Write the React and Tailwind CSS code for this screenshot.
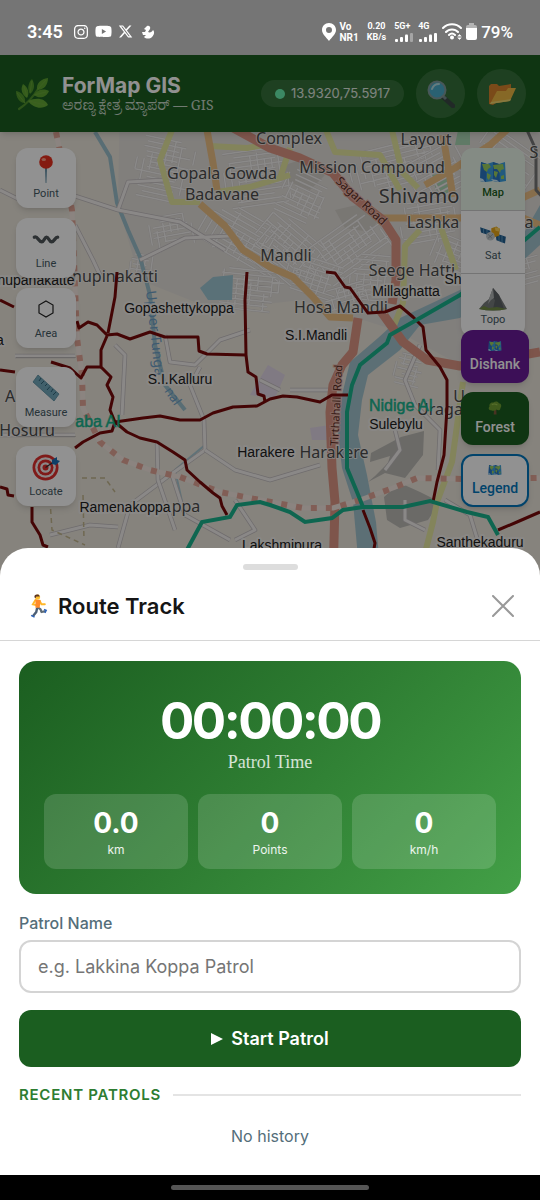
import React from "react";
import { FaInstagram, FaYoutube, FaXTwitter } from "react-icons/fa6";

/* ---------- pictograms ---------- */

const Leaf = ({ className }) => (
  <svg viewBox="0 0 34 34" className={className} aria-hidden="true">
    <path d="M4 32C10 28 17 22 23 12" stroke="#5c9e31" strokeWidth="2.2" fill="none" strokeLinecap="round" />
    <path d="M33 1C26 2 21 6 22 13C29 13 33 8 33 1Z" fill="#6fb536" />
    <path d="M17 2C13 6 12 12 15 17C20 13 20 7 17 2Z" fill="#5fa52f" />
    <path d="M8 7C5 12 7 18 12 21C15 16 13 10 8 7Z" fill="#6fb536" />
    <path d="M1 14C1 20 4 26 10 26C11 20 7 15 1 14Z" fill="#5fa52f" />
    <path d="M34 14C27 11 22 13 19 18C24 22 31 21 34 14Z" fill="#6fb536" />
    <path d="M33 28C30 21 21 20 13 24C18 31 27 33 33 28Z" fill="#78bd3c" />
    <path d="M31 3L23 12M17 4L15 16M9 9L12 20M2 16L10 26M31 15L19 18M30 28L14 24" stroke="#86c048" strokeWidth=".6" fill="none" />
  </svg>
);

const Magnifier = ({ className }) => (
  <svg viewBox="0 0 28 28" className={className} aria-hidden="true">
    <path d="M16 17L26 26" stroke="#3b4348" strokeWidth="4.500" strokeLinecap="round" />
    <path d="M15 15L19 19" stroke="#80919a" strokeWidth="3" />
    <circle cx="10" cy="10" r="8.500" fill="#4fb6e2" stroke="#8ca2ad" strokeWidth="2" />
    <path d="M5 9C6 6 8 4 12 4" stroke="#c8eefc" strokeWidth="2" fill="none" strokeLinecap="round" />
  </svg>
);

const Folder = ({ className }) => (
  <svg viewBox="0 0 28 24" className={className} aria-hidden="true">
    <path d="M1 4L3 2H9L11 4L23 2V10L5 23L1 22Z" fill="#e8862b" />
    <path d="M2 22L9 9L18 9L20 6L28 6L22 19Z" fill="#ffc044" />
    <path d="M2 22L22 19L23 17L3 20Z" fill="#ffdf75" />
  </svg>
);

const Pin = ({ className }) => (
  <svg viewBox="0 0 28 28" className={className} aria-hidden="true">
    <path d="M13 12H15L14.400 28H13.600Z" fill="#5c8aa2" />
    <circle cx="14" cy="7" r="6.800" fill="#e8311f" />
    <ellipse cx="11.800" cy="4.500" rx="2.200" ry="1.500" fill="#ff9d86" />
  </svg>
);

const Wave = ({ className }) => (
  <svg viewBox="0 0 30 28" className={className} aria-hidden="true">
    <path d="M2.500 12C6 10 7 17 10.500 17C13 17 13.500 12 15.500 12C18 12 18 17 21 17C24 17 24.500 12 27.500 12" stroke="#4f565a" strokeWidth="3.600" fill="none" strokeLinecap="round" />
  </svg>
);

const Hexagon = ({ className }) => (
  <svg viewBox="0 0 28 28" className={className} aria-hidden="true">
    <path d="M14 6L21 10V18L14 22L7 18V10Z" fill="none" stroke="#222" strokeWidth="1.200" />
  </svg>
);

const Ruler = ({ className }) => (
  <svg viewBox="0 0 28 28" className={className} aria-hidden="true">
    <path d="M6 1L27 20L22 27L1 8Z" fill="#72a9bd" stroke="#588c9e" strokeWidth=".8" />
    <path d="M9 4L7 7M12 7L9 10M15 10L13 12M18 12.500L15 16M21 15L19 18M24 18L21 21" stroke="#32657a" strokeWidth="1" />
  </svg>
);

const Target = ({ className }) => (
  <svg viewBox="0 0 28 28" className={className} aria-hidden="true">
    <circle cx="13.500" cy="14.500" r="13" fill="#df2f2d" />
    <circle cx="13.500" cy="14.500" r="10.300" fill="#f5eeee" />
    <circle cx="13.500" cy="14.500" r="8" fill="#df2f2d" />
    <circle cx="13.500" cy="14.500" r="5.300" fill="#f5eeee" />
    <circle cx="13.500" cy="14.500" r="3" fill="#df2f2d" />
    <path d="M13.500 14.500L23 8" stroke="#333" strokeWidth="1.200" />
    <path d="M20 7L25 4L25 7L28 8L24 12L20 11Z" fill="#1c6fb5" />
  </svg>
);

const WorldMap = ({ className }) => (
  <svg viewBox="0 0 28 24" className={className} aria-hidden="true">
    <path d="M2 2L8 4L14 2L20 4L26 2L27 21L21 22L14 21L7 22L1 21Z" fill="#3d9fe0" />
    <path d="M2 2L8 4L7 22L1 21ZM14 2L20 4L21 22L14 21Z" fill="#2b76c4" />
    <path d="M3 4L10 4L12 7L9 9L8 12L5 10ZM8 13L12 15L10 20L8 18ZM14 5L24 4L25 9L22 10L21 13L18 9L15 9ZM15 11L19 12L17 18L15 15ZM22 16L25 15L25 19L22 19Z" fill="#9bcf62" />
    <path d="M1 18L4 19L6 22L1 21ZM12 19L18 20L20 22L14 21Z" fill="#cdeaf8" />
  </svg>
);

const Satellite = ({ className }) => (
  <svg viewBox="0 0 30 28" className={className} aria-hidden="true">
    <path d="M0 5L12 9L12 15L1 11Z" fill="#235f91" />
    <path d="M18 12L30 16L29 24L19 20Z" fill="#235f91" />
    <path d="M4 6V12M8 8V14M22 14V21M25.500 15V23" stroke="#72b3da" strokeWidth=".8" />
    <path d="M13 6L19 4L23 7L22 15L16 17L13 14Z" fill="#e7a619" />
    <path d="M17 5L23 6L22 10L18 9Z" fill="#ffd45c" />
    <circle cx="12" cy="15.500" r="5" fill="#c5cdd0" />
    <path d="M9 13L14 18M9 18L15 13" stroke="#7b8a91" strokeWidth=".8" />
  </svg>
);

const Mountain = ({ className }) => (
  <svg viewBox="0 0 28 24" className={className} aria-hidden="true">
    <path d="M0 22L5 16L10 12L14 1L20 8L28 22Q14 25 0 22Z" fill="#777b7c" />
    <path d="M14 1L13 10L16 13L14 22L25 22L20 8Z" fill="#5c6164" />
    <path d="M14 1L11 9L9 17L12 13L15 11Z" fill="#b1b5b6" />
    <path d="M0 22L5 19L10 21L18 20L28 22Q14 25 0 22Z" fill="#718b46" />
  </svg>
);

const Tree = ({ className }) => (
  <svg viewBox="0 0 18 18" className={className} aria-hidden="true">
    <path d="M8 9H10.500L11 17.500H7.300Z" fill="#80583b" />
    <path d="M4 12C1 12 0 9 2 7C1 4 4 1 7 2C9 0 13 0 14 3C17 3 18 7 16 9C16 12 13 13 11 11C9 13 6 13 4 12Z" fill="#6f9f32" />
    <path d="M5 5C7 3 10 4 12 5" stroke="#9ac54e" strokeWidth="1.500" fill="none" />
  </svg>
);

const Runner = ({ className }) => (
  <svg viewBox="0 0 20 28" className={className} aria-hidden="true">
    <path d="M9 15L13 18L14 21L19 20" stroke="#5e6b75" strokeWidth="2.600" fill="none" strokeLinejoin="round" />
    <path d="M9 16L8 21L4 26" stroke="#4d5f75" strokeWidth="2.800" fill="none" />
    <path d="M17 18L19.500 19L18 22M2 25L6 27" stroke="#2e63b8" strokeWidth="1.800" fill="none" />
    <path d="M7 7L4 12L8 13M12 8L14 12L18 12" stroke="#ffb829" strokeWidth="2.200" fill="none" strokeLinecap="round" />
    <path d="M7 6L13 7L12 16L7 16Z" fill="#ff8a2a" />
    <circle cx="9.500" cy="3.500" r="3" fill="#ffc02e" />
    <path d="M6 4C5 1 8 0 11 1L12 3L8 3L7 5Z" fill="#5c3424" />
  </svg>
);

/* ---------- map ---------- */

const districts = [
  [135, 140, 60, 62, 12], [225, 150, 64, 60, -8], [200, 215, 90, 48, 30], [250, 225, 72, 56, 40],
  [215, 270, 70, 45, 6], [280, 175, 48, 46, 25], [350, 145, 90, 44, -14], [310, 225, 80, 50, -35],
  [285, 260, 60, 40, 18], [350, 255, 40, 46, 5], [400, 200, 60, 44, -10], [430, 240, 50, 40, 22],
  [325, 285, 50, 26, -16], [410, 150, 60, 46, -28], [395, 350, 28, 40, 14], [470, 320, 62, 46, 10],
  [150, 215, 45, 30, -10], [130, 255, 24, 28, 8], [470, 140, 70, 56, 35], [500, 240, 40, 50, -15],
];

function streetPath(w, h, seed) {
  let s = seed * 9301 + 49297;
  const rnd = () => (s = (s * 9301 + 49297) % 233280) / 233280;
  let d = "";
  for (let y = -h / 2; y < h / 2; y += 5) {
    const a = -w / 2 + rnd() * w * 0.3;
    d += `M${a} ${y}H${w / 2 - rnd() * w * 0.35}`;
  }
  for (let x = -w / 2; x < w / 2; x += 7) {
    const a = -h / 2 + rnd() * h * 0.5;
    d += `M${x} ${a}V${a + 10 + rnd() * h * 0.4}`;
  }
  return d;
}

const trunk = [
  "M215 118L270 148L300 158L333 173L353 197L383 220L396 240L396 280L392 304",
  "M358 318L353 352L342 365L333 385L330 412L332 468L335 502L333 580",
  "M380 310L403 342L427 360L460 366L540 352",
];
const primary = [
  "M207 130L213 163L217 190M200 204L225 226L243 250L270 267L293 277L313 297L330 317L353 318",
  "M383 218L460 218L500 208L540 190M443 135L453 197M425 185L455 168L490 145L540 100M480 200L540 225",
];
const secondary = [
  "M172 130L160 160L172 202L200 202M210 146L247 148L270 144M217 192L250 187L290 175",
  "M326 130L335 152L380 155L400 190M392 130L402 172L418 188M420 230L405 246L403 303L393 328",
  "M463 382L452 462L437 502L433 522L418 580M290 148L280 178M440 225L456 270",
];
const lanes = [
  "M75 196L118 210L180 222L225 250M75 225L93 260L100 275M140 260L185 238L230 236M118 210L128 182L165 180M0 190L30 205",
  "M165 335L170 362L195 365L220 340L250 330M200 367L190 385L204 420L205 450L170 475L130 505L118 548",
  "M205 450L235 470L270 480L320 465M115 345L125 355L122 415M157 440L158 480L175 530M172 475L185 515L230 540",
  "M420 345L405 380L415 405L440 430L438 470M395 430L400 450L385 470M405 500L405 520L425 530M445 500L470 515L480 548",
  "M290 390L330 390M260 380L280 390M50 535L90 525L118 527M235 500L255 530L235 540M0 435L75 435M15 356L75 356",
];
const boundary = [
  "M117 272L115 297L108 333M77 321L79 328L88 322L97 325L107 335L117 334L130 339L150 332L165 337L198 337L199 351L207 354L246 355",
  "M247 272L245 300L246 355L248 372L256 377L258 394L264 396L265 402",
  "M107 336L101 350L101 367L111 377L107 385L113 397L110 410L115 422L112 431L100 433L83 442L75 448",
  "M101 367L87 367L81 378L70 368L51 362M0 370L15 372M0 300L14 307",
  "M115 422L143 418L160 416L180 420L200 420L213 413L233 407L257 406L270 399L283 396L297 397L320 402L332 395L348 395",
  "M115 422L127 432L140 438L157 442L173 452L185 460L187 470L200 482L213 493L220 498L222 506L227 515",
  "M0 487L7 489L8 495L14 496M32 507L32 522L40 535L43 545L48 547",
  "M326 272L335 273L345 287L350 288L360 302L368 313L385 312L400 306L413 317L423 327L426 350L440 367L447 380L447 408L444 455L437 482L433 502",
  "M363 510L370 528L375 543L372 560M498 530L517 522L540 512",
];

function Label({ x, y, size, kind = "place", children }) {
  const place = kind === "place";
  const cls = place
    ? "fill-[#4c4c4c] font-['Noto_Sans','Open_Sans',sans-serif]"
    : "fill-[#202020] font-['Liberation_Sans',sans-serif]";
  return (
    <text x={x} y={y} fontSize={size ?? (place ? 16 : 14)} textAnchor="middle" stroke="#f3f1ee" strokeWidth={place ? 2 : 4} strokeOpacity=".8" paintOrder="stroke" strokeLinejoin="round" className={cls}>
      {children}
    </text>
  );
}

function MapCanvas() {
  return (
    <svg viewBox="0 132 540 444" preserveAspectRatio="xMidYMin slice" className="absolute inset-0 h-full w-full" role="img" aria-label="Map">
      <rect y="100" width="540" height="500" fill="#ebe6dc" />
      <path d="M120 100H540V350L470 370L395 330L300 300L215 310L140 280L118 205Z" fill="#e3dfdb" />
      <path d="M268 365L285 375L275 398L250 395ZM310 428L330 425L328 440L312 440Z" fill="#e2d6e6" />
      <path d="M432 175L450 172L448 195L436 190ZM458 130H470V145H455Z" fill="#a9d7b4" />
      <path d="M335 210L365 203L380 218L370 232L345 228ZM285 165L300 160L325 175L310 190L285 180Z" fill="#d5d1ca" />
      <path d="M424 431L401 437L371 453L370 462L390 456L388 463L375 476L368 482L385 473L405 478L423 455ZM384 497L400 483L420 492L440 502L428 520L400 528L387 520Z" fill="#bcbab6" />
      <g strokeWidth="1.500" fill="none">
        {districts.map(([x, y, w, h, a], i) => (
          <g key={i} transform={`translate(${x + w / 2} ${y + h / 2}) rotate(${a})`}>
            <path d={streetPath(w, h, i + 3)} stroke="#cfcbc9" strokeWidth="2.200" />
            <path d={streetPath(w, h, i + 3)} stroke="#f3f1f0" />
          </g>
        ))}
      </g>
      <path d="M200 288L213 277L233 275L232 300L208 300Z" fill="#9fc7d3" />
      <path d="M95 132L110 157L117 203L128 230L140 257L150 295L155 345L165 385L185 410" stroke="#9cc0cc" strokeWidth="4" fill="none" />
      <path d="M190 385L204 420L205 445L175 470L185 515M15 356H75" stroke="#a9c9d3" strokeWidth="2" fill="none" />
      <path d="M540 205L520 240L460 290L400 318L378 338L350 362L342 395L338 435L342 468L353 502L360 580H381L376 522L367 475L358 435L362 400L368 375L400 350L420 325L460 318L540 245Z" fill="#a3c4ce" />
      {lanes.map((d) => (
        <g key={d} fill="none" strokeLinejoin="round">
          <path d={d} stroke="#c3bec0" strokeWidth="4.500" />
          <path d={d} stroke="#f3efed" strokeWidth="3" />
        </g>
      ))}
      <g fill="none" strokeLinejoin="round">
        {secondary.map((d) => <path key={d} d={d} stroke="#e6e8a0" strokeWidth="6" />)}
        {primary.map((d) => <path key={d} d={d} stroke="#eec186" strokeWidth="7" />)}
        {trunk.map((d) => <path key={d} d={d} stroke="#dd9685" strokeWidth="9" />)}
        <path d="M56 132L72 210L77 338L82 375L83 408L100 442L123 460L150 470L180 477L220 492L260 500L303 508L333 508L360 500L393 488L417 478L463 479L540 478" stroke="#f5e8e2" strokeWidth="5" />
        <path d="M56 132L72 210L77 338L82 375L83 408L100 442L123 460L150 470L180 477L220 492L260 500L303 508L333 508L360 500L393 488L417 478L463 479L540 478" stroke="#e3a697" strokeWidth="6" strokeDasharray="6 9" />
        <path d="M527 130L536 150V190L545 200" stroke="#777" strokeWidth="3" />
        <path d="M82 478L105 478L115 492M50 500L52 530L85 545M83 495L84 540" stroke="#c4b78f" strokeWidth="1.500" strokeDasharray="5 4" />
      </g>

      <Label x={289} y={144}>Complex</Label>
      <Label x={426} y={145}>Layout</Label>
      <Label x={222} y={179}>Gopala Gowda</Label>
      <Label x={222} y={200}>Badavane</Label>
      <Label x={372} y={173}>Mission Compound</Label>
      <Label x={419} y={203} size={20}>Shivamo</Label>
      <Label x={433} y={228}>Lashka</Label>
      <Label x={529} y={228}>a</Label>
      <Label x={286} y={261}>Mandli</Label>
      <Label x={412} y={276}>Seege Hatti</Label>
      <Label x={341} y={313}>Hosa Mandli</Label>
      <Label x={334} y={458}>Harakere</Label>
      <Label x={115} y={282}>nupinakatti</Label>
      <Label x={10} y={402}>A</Label>
      <Label x={27} y={436}>Hosuru</Label>
      <Label x={186} y={512}>ppa</Label>
      <Label x={440} y={415}>Uraga</Label>
      <Label x={459} y={402}>U</Label>
      <Label x={534} y={158}>S</Label>
      <text fontSize="12" stroke="#e8b3a6" strokeWidth="2" paintOrder="stroke" transform="translate(335 182) rotate(43)" className="fill-[#5d2f27] font-['Noto_Sans',sans-serif]">Sagar Road</text>
      <text fontSize="11" transform="translate(338 446) rotate(-87)" stroke="#e8b3a6" strokeWidth="2" paintOrder="stroke" className="fill-[#5d2f27] font-['Noto_Sans',sans-serif]">Tirthahalli Road</text>
      <text fontSize="14" transform="translate(146 291) rotate(84)" className="fill-[#6e9fc6] font-['Noto_Sans',sans-serif]">Upper Tunga</text>
      <text fontSize="13" transform="translate(164 391) rotate(55)" className="fill-[#6e9fc6] font-['Noto_Sans',sans-serif]">nal</text>

      <g fill="none" strokeLinejoin="round" stroke="#780a0a" strokeWidth="3">
        {boundary.map((d) => <path key={d} d={d} />)}
      </g>
      <path d="M540 227L527 238L460 295L413 322L390 335L387 343L360 365L352 385L347 412L347 468L357 492L363 507" fill="none" stroke="#19b48e" strokeWidth="4" />
      <path d="M180 565L188 548L202 522L230 517L237 505L260 502L270 505L290 512L305 522L332 518L343 510L363 507L403 507L430 501L467 512L488 517L498 535" fill="none" stroke="#19b48e" strokeWidth="4" />
      <text x="401" y="411" fontSize="16" textAnchor="middle" stroke="#19b48e" strokeWidth=".5" className="fill-[#19b48e] font-['Liberation_Sans',sans-serif]">Nidige AI</text>
      <text x="98" y="427" fontSize="16" textAnchor="middle" stroke="#19b48e" strokeWidth=".5" className="fill-[#19b48e] font-['Liberation_Sans',sans-serif]">aba AI</text>

      <Label kind="village" x={179} y={313}>Gopashettykoppa</Label>
      <Label kind="village" x={180} y={384}>S.I.Kalluru</Label>
      <Label kind="village" x={316} y={340}>S.I.Mandli</Label>
      <Label kind="village" x={406} y={296}>Millaghatta</Label>
      <Label kind="village" x={396} y={429}>Sulebylu</Label>
      <Label kind="village" x={266} y={457}>Harakere</Label>
      <Label kind="village" x={125} y={512}>Ramenakoppa</Label>
      <Label kind="village" x={282} y={550}>Lakshmipura</Label>
      <Label kind="village" x={480} y={547}>Santhekaduru</Label>
      <Label kind="village" x={36} y={285}>nupanakatte</Label>
      <Label kind="village" x={453} y={284}>Sh</Label>
      <Label kind="village" x={0} y={345}>a</Label>
    </svg>
  );
}

/* ---------- screen parts ---------- */

function Bars({ tag, faded }) {
  return (
    <div className="flex flex-col gap-0.5">
      <span className="text-[9px] leading-[9px] font-bold">{tag}</span>
      <svg viewBox="0 0 20 9" className="h-[9px] w-5" fill="#fff" aria-hidden="true">
        <rect x="1" y="6" width="3" height="3" rx="1" />
        <rect x="6" y="4" width="3" height="5" rx="1" />
        <rect x="11" y="1.500" width="3" height="7.500" rx="1" />
        <rect x="16" y="0" width="3" height="9" rx="1" opacity={faded ? 0.35 : 1} />
      </svg>
    </div>
  );
}

function StatusBar() {
  return (
    <div className="flex h-[55px] shrink-0 items-center justify-between bg-[#757575] px-[27px] pt-2 font-['Roboto',sans-serif] text-white">
      <div className="flex items-center gap-1.5">
        <span className="mr-1 text-[18px] leading-6 font-semibold">3:45</span>
        <FaInstagram className="size-4" />
        <FaYoutube className="size-[17px]" />
        <FaXTwitter className="size-[15px]" />
        <svg viewBox="0 0 14 14" className="ml-0.5 size-3.5" fill="#fff" aria-hidden="true">
          <path d="M6 1C8 0 10 2 9 4L7 7C9 8 11 7 12 5C14 7 13 10 11 12C9 14 5 14 3 12L5 10L2 10L1 7H4L5 5L3 4Z" />
        </svg>
      </div>
      <div className="flex items-center gap-1">
        <svg viewBox="0 0 14 18" className="h-[18px] w-3.5" aria-hidden="true">
          <path fillRule="evenodd" d="M7 0C3 0 0 3 0 7C0 11 4 14 7 18C10 14 14 11 14 7C14 3 11 0 7 0ZM7 4A3 3 0 1 1 7 10A3 3 0 1 1 7 4Z" fill="#fff" />
        </svg>
        <div className="mr-1 flex flex-col text-[10px] leading-[11px] font-bold">
          <span>Vo</span>
          <span>NR1</span>
        </div>
        <div className="mr-1 flex flex-col items-center text-[9px] leading-[11px] font-bold">
          <span>0.20</span>
          <span>KB/s</span>
        </div>
        <Bars tag="5G+" faded />
        <Bars tag="4G" />
        <svg viewBox="0 0 20 17" className="h-[17px] w-5" fill="none" stroke="#fff" strokeWidth="2" strokeLinecap="round" aria-hidden="true">
          <path d="M1 5C6 0 14 0 19 5M4 9C7 5.500 13 5.500 16 9M7 12C9 10 11 10 13 12" />
          <circle cx="10" cy="14.500" r="1" fill="#fff" />
          <path d="M16 13L17.500 11.500L19 13ZM16 15L17.500 16.500L19 15Z" strokeWidth=".6" fill="#fff" />
        </svg>
        <svg viewBox="0 0 11 17" className="h-[17px] w-[11px]" aria-hidden="true">
          <path d="M3 0H8V2H9Q11 2 11 4V6H0V4Q0 2 2 2H3Z" fill="#b4b4b4" />
          <path d="M0 5H11V15Q11 17 9 17H2Q0 17 0 15Z" fill="#fff" />
        </svg>
        <span className="text-[17px] leading-6 font-medium">79%</span>
      </div>
    </div>
  );
}

function Header() {
  return (
    <header className="relative z-10 flex h-[77px] shrink-0 items-center bg-[#1b5e20] pr-3.5 pl-[15px] text-white shadow-md">
      <Leaf className="size-[34px] shrink-0 opacity-80" />
      <div className="ml-[13px] flex flex-col">
        <h1 className="text-[21px] leading-[22px] font-bold">ForMap GIS</h1>
        <p className="font-['Noto_Serif','Noto_Serif_Kannada','Noto_Sans_Kannada','Liberation_Serif',serif] text-[14px] leading-4 whitespace-nowrap text-white/75">ಅರಣ್ಯ ಕ್ಷೇತ್ರ ಮ್ಯಾಪರ್ — GIS</p>
      </div>
      <div className="ml-auto flex shrink-0 items-center gap-3">
        <div className="flex h-[27px] items-center gap-1.5 rounded-full bg-white/12 px-3.5 text-[13px]">
          <span className="size-2.5 rounded-full bg-[#69f0ae]" />
          <span className="text-white/85">13.9320,75.5917</span>
        </div>
        <button type="button" aria-label="Search" className="flex size-[49px] items-center justify-center rounded-full bg-white/12">
          <Magnifier className="size-7 opacity-85" />
        </button>
        <button type="button" aria-label="Open project" className="flex size-[49px] items-center justify-center rounded-full bg-white/12">
          <Folder className="h-6 w-7 opacity-90" />
        </button>
      </div>
    </header>
  );
}

function Tool({ icon: Icon, label }) {
  return (
    <button type="button" className="flex size-[60px] flex-col items-center justify-center rounded-xl bg-white font-['Roboto',sans-serif] text-[11px] leading-[14px] text-[#455a64] shadow-md">
      <Icon className="mb-1 size-7" />
      {label}
    </button>
  );
}

function Tools() {
  return (
    <div className="absolute top-4 left-4 flex flex-col gap-2.5">
      <Tool icon={Pin} label="Point" />
      <Tool icon={Wave} label="Line" />
      <Tool icon={Hexagon} label="Area" />
      <hr className="-my-px border-black/15" />
      <Tool icon={Ruler} label="Measure" />
      <hr className="-my-px border-black/15" />
      <Tool icon={Target} label="Locate" />
    </div>
  );
}

function Layer({ icon: Icon, label, active }) {
  return (
    <button type="button" aria-pressed={Boolean(active)} className={`flex h-[63px] w-full flex-col items-center justify-center gap-0.5 pt-0.5 text-[11px] leading-[14px] font-['Roboto',sans-serif] ${active ? "bg-[#e8f5e9] font-medium text-[#1b5e20]" : "bg-white text-[#455a64]"}`}>
      <Icon className="h-6 w-7" />
      {label}
    </button>
  );
}

const chip = "flex h-[53px] w-[68px] flex-col items-center justify-center gap-1 rounded-xl font-['Roboto',sans-serif] text-[14px] leading-[17px] font-medium shadow-md";

function LayerControls() {
  return (
    <>
      <div className="absolute top-4 right-[15px] w-16 divide-y divide-[#ccc] overflow-hidden rounded-xl shadow-md">
        <Layer icon={WorldMap} label="Map" active />
        <Layer icon={Satellite} label="Sat" />
        <Layer icon={Mountain} label="Topo" />
      </div>
      <div className="absolute top-[198px] right-[11px] flex flex-col gap-[9px]">
        <button type="button" className={`${chip} bg-[#6a1b9a] text-white`}>
          <WorldMap className="h-3 w-3.5" />
          Dishank
        </button>
        <button type="button" className={`${chip} bg-[#1b5e20] text-white`}>
          <Tree className="size-3.5" />
          Forest
        </button>
        <button type="button" className={`${chip} border-2 border-[#0277bd] bg-white text-[#0277bd]`}>
          <WorldMap className="h-3 w-3.5" />
          Legend
        </button>
      </div>
    </>
  );
}

function Stat({ value, label }) {
  return (
    <div className="flex flex-1 flex-col items-center rounded-xl bg-white/15 pt-[13px] pb-2">
      <span className="text-[28px] leading-8 font-bold">{value}</span>
      <span className="text-[12px] leading-[22px] text-white/90">{label}</span>
    </div>
  );
}

function PatrolSheet() {
  return (
    <section className="relative z-20 -mt-7 shrink-0 rounded-t-[28px] bg-white" aria-labelledby="sheet-title">
      <div className="flex justify-center pt-4">
        <span className="h-1.5 w-[55px] rounded-full bg-[#ddd]" />
      </div>
      <div className="flex items-center justify-between border-b border-[#d6d6d6] px-[26px] pt-[21px] pb-[19px]">
        <h2 id="sheet-title" className="flex items-center gap-2 text-[22px] leading-[30px] font-semibold text-[#151515]">
          <Runner className="h-6 w-6" />
          Route Track
        </h2>
        <button type="button" aria-label="Close" className="text-[#999]">
          <svg viewBox="0 0 22 22" className="size-[22px]" fill="none" stroke="currentColor" strokeWidth="2" strokeLinecap="round" aria-hidden="true">
            <path d="M1 1L21 21M21 1L1 21" />
          </svg>
        </button>
      </div>

      <div className="flex flex-col px-[19px] pt-5 pb-7">
        <div className="flex flex-col items-center rounded-[17px] bg-linear-135 from-[#1b5e20] via-[#2e7d32] to-[#43a047] px-[25px] pt-[29px] pb-[25px] text-white">
          <div className="text-[51px] leading-[62px] font-bold tracking-tighter">00:00:00</div>
          <div className="font-['Liberation_Serif',serif] text-[18px] leading-5 text-white/80">Patrol Time</div>
          <div className="mt-[22px] flex w-full gap-2.5">
            <Stat value="0.0" label="km" />
            <Stat value="0" label="Points" />
            <Stat value="0" label="km/h" />
          </div>
        </div>

        <label htmlFor="patrol-name" className="mt-[18px] text-[16px] leading-[22px] font-medium text-[#546e7a]">Patrol Name</label>
        <input id="patrol-name" type="text" placeholder="e.g. Lakkina Koppa Patrol" className="mt-1.5 h-[53px] w-full rounded-xl border-2 border-[#d4d4d4] px-[17px] text-[18px] text-[#222] placeholder:text-[#757575]" />

        <button type="button" className="mt-[17px] flex h-[57px] w-full items-center justify-center gap-2 rounded-xl bg-[#1b5e20] text-[18px] font-semibold text-white">
          <svg viewBox="0 0 12 12" className="size-3" fill="currentColor" aria-hidden="true">
            <path d="M0 0L12 6L0 12Z" />
          </svg>
          Start Patrol
        </button>

        <div className="mt-[17px] flex items-center gap-3">
          <h3 className="text-[15px] leading-[22px] font-semibold tracking-wider text-[#2e7d32]">RECENT PATROLS</h3>
          <span className="h-0.5 flex-1 bg-[#e4e4e4]" />
        </div>
        <p className="mt-[19px] text-center text-[16px] leading-[22px] text-[#546e7a]">No history</p>
      </div>
    </section>
  );
}

export default function App() {
  return (
    <div className="flex min-h-screen flex-col bg-white font-['Inter',sans-serif]">
      <StatusBar />
      <div className="relative flex flex-1 flex-col">
        <Header />
        <main className="relative min-h-[443px] flex-1 overflow-hidden">
          <MapCanvas />
          <Tools />
          <LayerControls />
        </main>
        <div className="absolute inset-0 z-10 bg-black/43" />
      </div>
      <PatrolSheet />
      <div className="flex h-[25px] shrink-0 items-center justify-center bg-black">
        <span className="h-[5px] w-[198px] rounded-full bg-[#555]" />
      </div>
    </div>
  );
}
